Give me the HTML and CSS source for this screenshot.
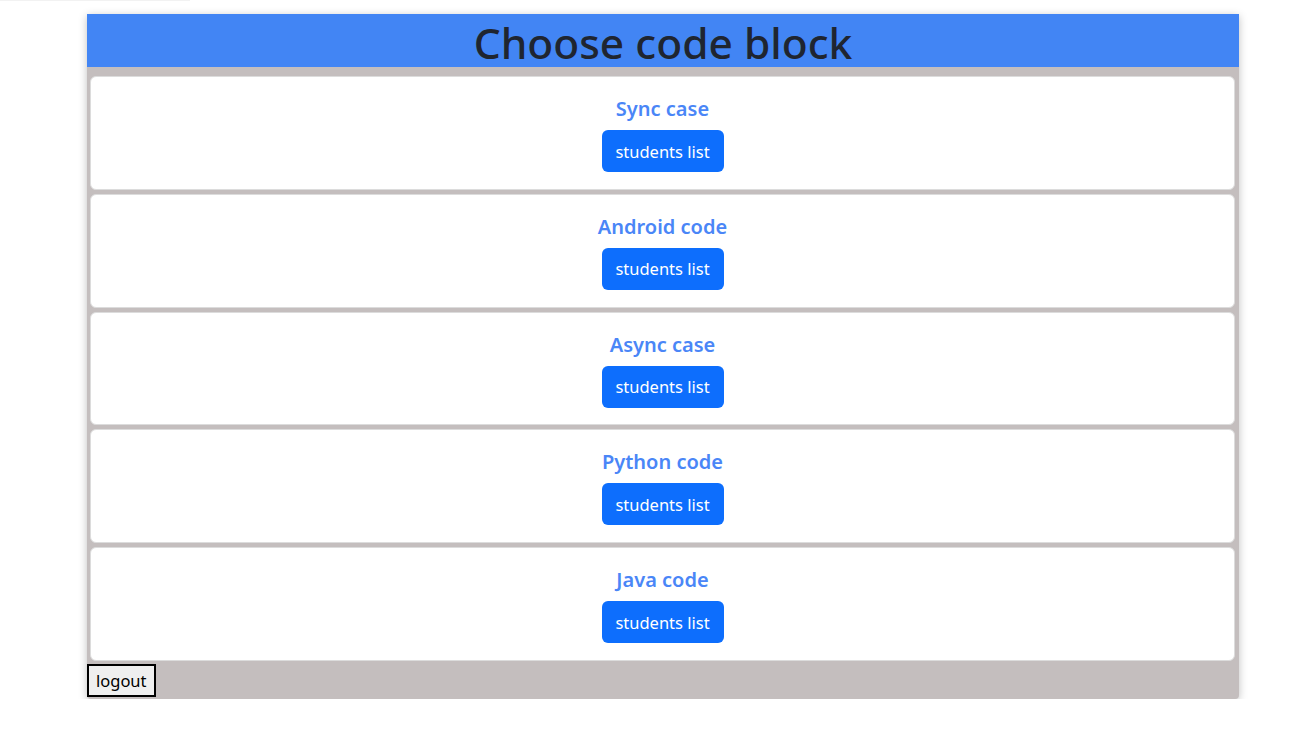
FILE: index.html
```html
<!DOCTYPE html>
<html>
<head>
<meta charset="utf-8">
<link rel="stylesheet" href="styles.css">
</head>
<body>
<div class="topbar"></div>
<div class="panel">
  <h1 class="header">Choose code block</h1>
  <div class="list">
    <div class="card"><h3 class="card-title">Sync case</h3><button class="btn">students list</button></div>
    <div class="card"><h3 class="card-title">Android code</h3><button class="btn">students list</button></div>
    <div class="card"><h3 class="card-title">Async case</h3><button class="btn">students list</button></div>
    <div class="card"><h3 class="card-title">Python code</h3><button class="btn">students list</button></div>
    <div class="card"><h3 class="card-title">Java code</h3><button class="btn">students list</button></div>
  </div>
  <button class="logout">logout</button>
</div>
</body>
</html>
```
FILE: styles.css
```css
* { box-sizing: border-box; }
body {
  margin: 0;
  background: #fff;
  font-family: "Noto Sans", "Open Sans", sans-serif;
}
.topbar {
  width: 190px;
  height: 1px;
  background: #f2f2f2;
}
.panel {
  width: 1152px;
  margin: 13px 0 0 87px;
  background: #c4bebe;
  border-radius: 0 0 4px 4px;
  box-shadow: 0 2px 8px rgba(0,0,0,0.25);
  padding-bottom: 2px;
}
.header {
  margin: 0;
  height: 53px;
  background: #4285f4;
  color: #1f2530;
  font-size: 42.5px;
  font-weight: 500;
  text-align: center;
  line-height: 57px;
}
.list {
  display: flex;
  flex-direction: column;
  gap: 4px;
  padding: 9px 4px 3px 3px;
}
.card {
  height: 113.8px;
  background: #fff;
  border: 1px solid #dcdcdc;
  border-radius: 6px;
  display: flex;
  flex-direction: column;
  align-items: center;
  padding-top: 19px;
}
.card-title {
  margin: 0 0 9px;
  color: #4a86f7;
  font-size: 20px;
  font-weight: 600;
  line-height: 25px;
}
.btn {
  height: 42px;
  width: 122px;
  background: #0d6efd;
  color: #fff;
  border: none;
  border-radius: 6px;
  font-family: inherit;
  font-size: 16.5px;
  padding: 0;
}
.logout {
  display: block;
  height: 33px;
  padding: 0 7px;
  background: #efefef;
  border: 2px solid #000;
  font-family: inherit;
  font-size: 16.5px;
  color: #000;
}
```
